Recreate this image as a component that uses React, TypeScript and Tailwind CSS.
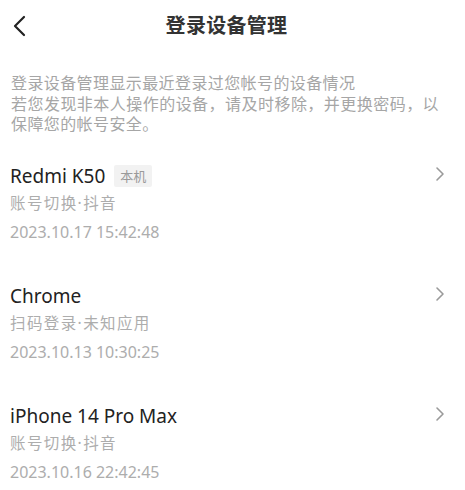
import React from "react";

const font = { fontFamily: '"Noto Sans", "Noto Sans CJK SC", sans-serif' };

function Chevron() {
  return (
    <svg width="10" height="16" viewBox="0 0 10 16" className="shrink-0">
      <path d="M2 2 L8 8 L2 14" fill="none" stroke="#9a9a9a" strokeWidth="1.6" strokeLinecap="round" strokeLinejoin="round" />
    </svg>
  );
}

type Device = { name: string; local?: boolean; sub: string; time: string };

const devices: Device[] = [
  { name: "Redmi K50", local: true, sub: "账号切换·抖音", time: "2023.10.17 15:42:48" },
  { name: "Chrome", sub: "扫码登录·未知应用", time: "2023.10.13 10:30:25" },
  { name: "iPhone 14 Pro Max", sub: "账号切换·抖音", time: "2023.10.16 22:42:45" },
];

export default function App() {
  return (
    <div className="w-[465px] h-[490px] bg-white overflow-hidden" style={font}>
      <div className="h-[52px] flex items-center pl-[12px] pr-[12px]">
        <svg width="16" height="22" viewBox="0 0 16 22" className="shrink-0">
          <path d="M12 2 L3 11 L12 20" fill="none" stroke="#222" strokeWidth="2.2" strokeLinecap="round" strokeLinejoin="round" />
        </svg>
        <div className="flex-1 text-center text-[20px] font-semibold text-[#333] tracking-[0.3px] pr-[28px] leading-[26px]">
          登录设备管理
        </div>
      </div>
      <div className="mt-[21px] pl-[11px] text-[16px] leading-[20.5px] text-[#a6a6a6] tracking-[0.4px]">
        <div>登录设备管理显示最近登录过您帐号的设备情况</div>
        <div className="w-[428px] text-justify [text-align-last:justify]">若您发现非本人操作的设备，请及时移除，并更换密码，以</div>
        <div>保障您的帐号安全。</div>
      </div>
      <div className="mt-[27px] flex flex-col gap-[36px]">
        {devices.map((d) => (
          <div key={d.name} className="flex pl-[10px] pr-[20px]">
            <div className="flex-1 flex flex-col">
              <div className="h-[28px] flex items-center gap-[9px]">
                <span className="text-[19px] text-[#222] leading-[28px]">{d.name}</span>
                {d.local && (
                  <span className="bg-[#f2f2f2] text-[#9a9a9a] text-[13px] leading-[22px] px-[6px] rounded-[2px]">本机</span>
                )}
              </div>
              <div className="h-[28px] flex items-center text-[15.5px] text-[#adadad] tracking-[1.4px]">{d.sub}</div>
              <div className="h-[28px] flex items-center text-[16px] text-[#adadad]">{d.time}</div>
            </div>
            <div className="h-[24px] flex items-center">
              <Chevron />
            </div>
          </div>
        ))}
      </div>
    </div>
  );
}
